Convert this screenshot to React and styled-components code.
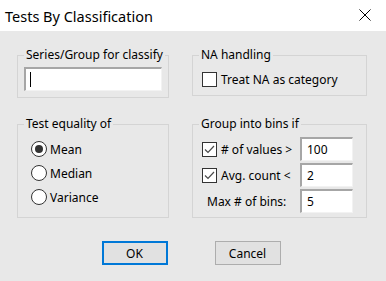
import React from "react";
import styled, { createGlobalStyle } from "styled-components";

const GlobalStyle = createGlobalStyle`
  body {
    margin: 0;
    font-family: "Noto Sans", "Open Sans", sans-serif;
    font-size: 12px;
    color: #000;
  }
`;

function App() {
  return (
    <Dialog>
      <GlobalStyle />
      <TitleBar>
        <Title>Tests By Classification</Title>
        <CloseButton>
          <svg width="12" height="12" viewBox="0 0 12 12">
            <path d="M0.5 0.5 L11.5 11.5 M11.5 0.5 L0.5 11.5" stroke="#000" strokeWidth="1" />
          </svg>
        </CloseButton>
      </TitleBar>
      <Content>
        <Groups>
          <Group>
            <Legend>Series/Group for classify</Legend>
            <Inner $pad="4px 6px 6px 6px">
              <Field $width="100%">
                <Caret />
              </Field>
            </Inner>
          </Group>
          <Group>
            <Legend>NA handling</Legend>
            <Inner $pad="6px 0 6px 9px">
              <CheckRow>
                <Checkbox />
                Treat NA as category
              </CheckRow>
            </Inner>
          </Group>
          <Group>
            <Legend>Test equality of</Legend>
            <Inner $pad="5px 0 8px 13px">
              <RadioRow>
                <Radio $checked />
                Mean
              </RadioRow>
              <RadioRow>
                <Radio />
                Median
              </RadioRow>
              <RadioRow>
                <Radio />
                Variance
              </RadioRow>
            </Inner>
          </Group>
          <Group>
            <Legend>Group into bins if</Legend>
            <Inner $pad="5px 13px 4px 9px">
              <BinGrid>
                <CheckRow>
                  <Checkbox $checked />
                  # of values &gt;
                </CheckRow>
                <Field $width="53px">100</Field>
                <CheckRow>
                  <Checkbox $checked />
                  Avg. count &lt;
                </CheckRow>
                <Field $width="53px">2</Field>
                <PlainLabel>Max # of bins:</PlainLabel>
                <Field $width="53px">5</Field>
              </BinGrid>
            </Inner>
          </Group>
        </Groups>
        <Buttons>
          <Button $default>OK</Button>
          <Button>Cancel</Button>
        </Buttons>
      </Content>
    </Dialog>
  );
}

function Checkbox({ $checked }) {
  return (
    <Box>
      {$checked && (
        <svg width="13" height="13" viewBox="0 0 13 13">
          <polyline points="2,6.5 5,9.5 11,3" fill="none" stroke="#4a4a4a" strokeWidth="1.2" />
        </svg>
      )}
    </Box>
  );
}

const Dialog = styled.div`
  width: 386px;
  height: 281px;
  background: #e8e8e8;
  overflow: hidden;
`;

const TitleBar = styled.div`
  height: 31px;
  background: #fff;
  display: flex;
  align-items: center;
  justify-content: space-between;
  padding: 0 15px 0 5px;
  box-sizing: border-box;
`;

const Title = styled.span`
  font-size: 14.5px;
`;

const CloseButton = styled.span`
  display: flex;
  width: 12px;
  height: 12px;
  margin-bottom: 1px;
`;

const Content = styled.div`
  padding: 16px 19px 0 17px;
`;

const Groups = styled.div`
  display: grid;
  grid-template-columns: 152px 175px;
  column-gap: 23px;
  row-gap: 18px;
  align-items: start;
`;

const Group = styled.fieldset`
  margin: 0;
  padding: 0;
  min-width: 0;
  border: 1px solid #d4d4d4;
`;

const Legend = styled.legend`
  margin-left: 6px;
  padding: 0 2px;
  line-height: 16px;
  font-size: 12px;
`;

const Inner = styled.div`
  padding: ${(p) => p.$pad};
`;

const Field = styled.div`
  width: ${(p) => p.$width};
  height: 24px;
  box-sizing: border-box;
  background: #fff;
  border-top: 2px solid #a6a6a6;
  border-left: 2px solid #a6a6a6;
  border-right: 1px solid #f2f2f2;
  border-bottom: 1px solid #f2f2f2;
  display: flex;
  align-items: center;
  padding-left: 5px;
  font-size: 12px;
`;

const Caret = styled.span`
  display: block;
  width: 1px;
  height: 15px;
  background: #000;
  margin-left: -1px;
`;

const CheckRow = styled.div`
  display: flex;
  align-items: center;
  gap: 4px;
  height: 20px;
  white-space: nowrap;
`;

const Box = styled.span`
  width: 15px;
  height: 15px;
  box-sizing: border-box;
  border: 1px solid #333;
  background: #fff;
  display: flex;
  align-items: center;
  justify-content: center;
  flex: none;
`;

const RadioRow = styled.div`
  display: flex;
  align-items: center;
  gap: 3px;
  height: 24px;
`;

const Radio = styled.span`
  width: 16px;
  height: 16px;
  box-sizing: border-box;
  border-radius: 50%;
  border: 1px solid #333;
  background: #fff;
  display: flex;
  align-items: center;
  justify-content: center;
  &::after {
    content: "";
    width: 8px;
    height: 8px;
    border-radius: 50%;
    background: ${(p) => (p.$checked ? "#333" : "transparent")};
  }
`;

const BinGrid = styled.div`
  display: grid;
  grid-template-columns: 1fr 53px;
  grid-auto-rows: 24px;
  row-gap: 2px;
  align-items: center;
`;

const PlainLabel = styled.span`
  padding-left: 5px;
`;

const Buttons = styled.div`
  display: flex;
  justify-content: center;
  gap: 47px;
  margin-top: 23px;
  padding-right: 2px;
`;

const Button = styled.button`
  width: 66px;
  height: 24px;
  box-sizing: border-box;
  background: #e1e1e1;
  border: ${(p) => (p.$default ? "2px solid #0078d7" : "1px solid #adadad")};
  font-family: inherit;
  font-size: 12px;
  color: #000;
  padding: 0;
`;

export default App;
